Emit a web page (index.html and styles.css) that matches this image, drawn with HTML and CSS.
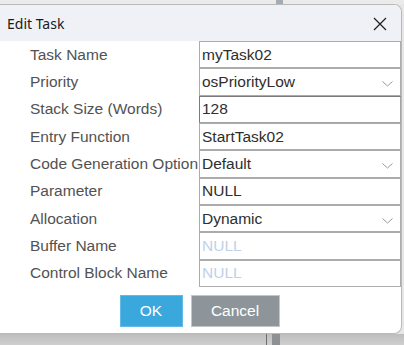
FILE: index.html
```html
<!doctype html>
<html>
  <head>
    <meta charset="UTF-8">
    <title>Edit Task</title>
    <link rel="stylesheet" href="styles.css">
  </head>
  <body>
    <div class="backdrop-top"></div>

    <div class="dialog">
      <div class="titlebar">
        <span class="title">Edit Task</span>
        <svg class="close" width="14" height="14" viewBox="0 0 14 14">
          <path d="M1 1 L13 13 M13 1 L1 13" stroke="#1e1e1e" stroke-width="1.2" fill="none"/>
        </svg>
      </div>

      <div class="fields">
        <div class="label">Task Name</div>
        <div class="field">myTask02</div>

        <div class="label">Priority</div>
        <div class="field select">osPriorityLow
          <svg class="chevron" width="11" height="6" viewBox="0 0 11 6"><path d="M0.5 0.5 L5.5 5 L10.5 0.5" stroke="#9a9a9a" fill="none"/></svg>
        </div>

        <div class="label">Stack Size (Words)</div>
        <div class="field focused">128</div>

        <div class="label">Entry Function</div>
        <div class="field">StartTask02</div>

        <div class="label">Code Generation Option</div>
        <div class="field select">Default
          <svg class="chevron" width="11" height="6" viewBox="0 0 11 6"><path d="M0.5 0.5 L5.5 5 L10.5 0.5" stroke="#9a9a9a" fill="none"/></svg>
        </div>

        <div class="label">Parameter</div>
        <div class="field">NULL</div>

        <div class="label">Allocation</div>
        <div class="field select">Dynamic
          <svg class="chevron" width="11" height="6" viewBox="0 0 11 6"><path d="M0.5 0.5 L5.5 5 L10.5 0.5" stroke="#9a9a9a" fill="none"/></svg>
        </div>

        <div class="label">Buffer Name</div>
        <div class="field placeholder">NULL</div>

        <div class="label">Control Block Name</div>
        <div class="field placeholder">NULL</div>
      </div>

      <div class="buttons">
        <button class="btn ok">OK</button>
        <button class="btn cancel">Cancel</button>
      </div>
    </div>

    <div class="backdrop-bottom"></div>
  </body>
</html>
```

FILE: styles.css
```css
body {
  margin: 0;
  width: 404px;
  height: 345px;
  overflow: hidden;
  background-color: #e6e6e6;
  font-family: "Liberation Sans", Arial, sans-serif;
}

.backdrop-top {
  height: 4px;
  background: linear-gradient(to right, #ebebeb 276px, #a5abb2 276px, #a5abb2 283px, #ebebeb 283px);
}

.backdrop-bottom {
  height: 11px;
  background:
    linear-gradient(to right, transparent 266px, #6e6e6e 266px, #6e6e6e 267px, transparent 267px, transparent 272px, #8e9194 272px, #8e9194 280px, transparent 280px),
    linear-gradient(to bottom, #bdbdbd, #cfcfcf);
}

.dialog {
  width: 401px;
  background-color: white;
  border: 1px solid #b9b9b9;
  border-left: none;
  border-radius: 0 8px 8px 0;
  overflow: hidden;
}

.titlebar {
  height: 36px;
  display: flex;
  align-items: center;
  padding-left: 7px;
  padding-right: 14px;
  background-color: #f0f1f6;
}

.title {
  font-family: "Noto Sans", sans-serif;
  font-size: 14px;
  color: #1a1a1a;
}

.close {
  margin-left: auto;
  margin-top: 2px;
}

.fields {
  display: grid;
  grid-template-columns: 199px 1fr;
  grid-auto-rows: 27.33px;
  font-size: 15.5px;
}

.label {
  display: flex;
  align-items: center;
  padding-left: 30px;
  color: #525252;
  white-space: nowrap;
  overflow: hidden;
}

.field {
  display: flex;
  align-items: center;
  padding-left: 2px;
  border: 1px solid #acacac;
  color: #2e2e2e;
}

.field:first-of-type {
  border-top-color: #eeeeee;
}

.focused {
  border-color: #7a7a7a #a4a4a4 #a4a4a4 #7a7a7a;
}

.placeholder {
  color: #bdd1e9;
}

.chevron {
  margin-left: auto;
  margin-right: 7px;
  margin-top: 4px;
}

.buttons {
  display: flex;
  justify-content: center;
  gap: 8px;
  margin-top: 8px;
  padding-bottom: 6px;
  padding-right: 2px;
}

.btn {
  height: 32px;
  font-family: "Liberation Sans", Arial, sans-serif;
  font-size: 15.5px;
  color: white;
  border: 1px solid;
  padding: 0;
}

.ok {
  width: 63px;
  background-color: #3aa8dc;
  border-color: #62bbe6;
}

.cancel {
  width: 89px;
  background-color: #8d959b;
  border-color: #c3c7ca;
}
```
